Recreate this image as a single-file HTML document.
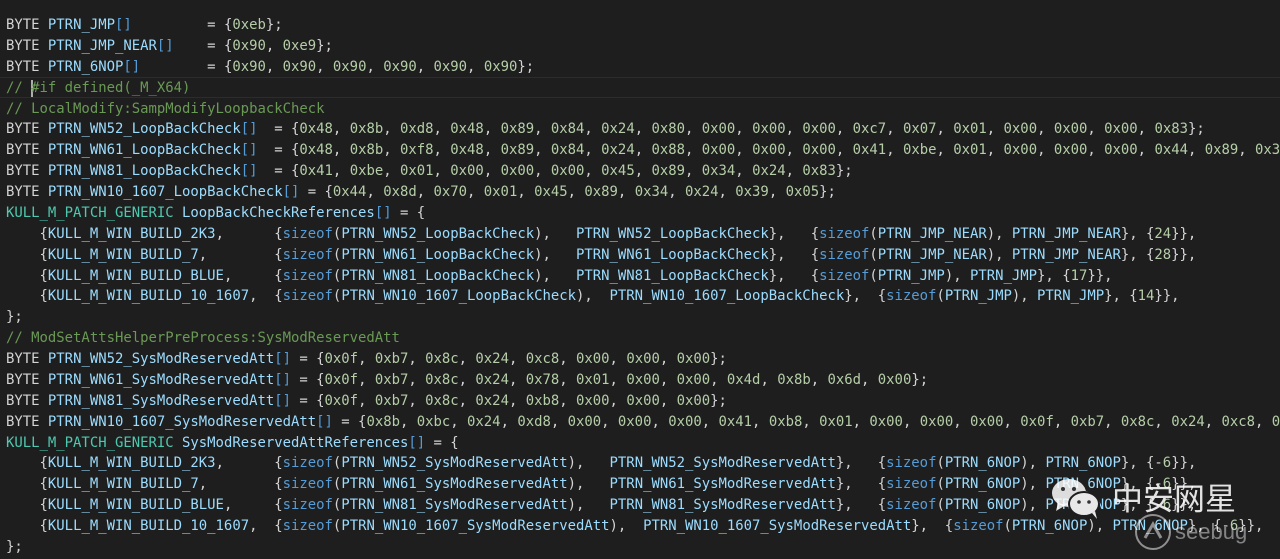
<!DOCTYPE html>
<html><head><meta charset="utf-8"><style>
html,body{margin:0;padding:0;background:#1e1e1e;width:1280px;height:559px;overflow:hidden}
#c{position:absolute;left:6px;top:15px;font-family:"DejaVu Sans Mono","Liberation Mono",monospace;font-size:13.93px;line-height:20.88px;color:#d4d4d4;white-space:pre}
.v{color:#9cdcfe}.b{color:#569cd6}.n{color:#b5cea8}.c{color:#6a9955}.t{color:#4ec9b0}
.cur{position:absolute;left:0;width:1280px;top:77px;height:21px;border-top:1px solid #2c2c2c;border-bottom:1px solid #2c2c2c;box-sizing:border-box}
.caret{position:absolute;left:31px;top:80px;width:2px;height:17px;background:#aeafad}
.wm{position:absolute;color:rgba(255,255,255,.88);font-family:"Noto Sans CJK SC",sans-serif}
</style></head><body>
<div class="cur"></div><div class="caret"></div>
<div id="c">BYTE <span class="v">PTRN_JMP</span><span class="b">[]</span>         = {<span class="n">0xeb</span>};
BYTE <span class="v">PTRN_JMP_NEAR</span><span class="b">[]</span>    = {<span class="n">0x90</span>, <span class="n">0xe9</span>};
BYTE <span class="v">PTRN_6NOP</span><span class="b">[]</span>        = {<span class="n">0x90</span>, <span class="n">0x90</span>, <span class="n">0x90</span>, <span class="n">0x90</span>, <span class="n">0x90</span>, <span class="n">0x90</span>};
<span class="c">// #if defined(_M_X64)</span>
<span class="c">// LocalModify:SampModifyLoopbackCheck</span>
BYTE <span class="v">PTRN_WN52_LoopBackCheck</span><span class="b">[]</span>  = {<span class="n">0x48</span>, <span class="n">0x8b</span>, <span class="n">0xd8</span>, <span class="n">0x48</span>, <span class="n">0x89</span>, <span class="n">0x84</span>, <span class="n">0x24</span>, <span class="n">0x80</span>, <span class="n">0x00</span>, <span class="n">0x00</span>, <span class="n">0x00</span>, <span class="n">0xc7</span>, <span class="n">0x07</span>, <span class="n">0x01</span>, <span class="n">0x00</span>, <span class="n">0x00</span>, <span class="n">0x00</span>, <span class="n">0x83</span>};
BYTE <span class="v">PTRN_WN61_LoopBackCheck</span><span class="b">[]</span>  = {<span class="n">0x48</span>, <span class="n">0x8b</span>, <span class="n">0xf8</span>, <span class="n">0x48</span>, <span class="n">0x89</span>, <span class="n">0x84</span>, <span class="n">0x24</span>, <span class="n">0x88</span>, <span class="n">0x00</span>, <span class="n">0x00</span>, <span class="n">0x00</span>, <span class="n">0x41</span>, <span class="n">0xbe</span>, <span class="n">0x01</span>, <span class="n">0x00</span>, <span class="n">0x00</span>, <span class="n">0x00</span>, <span class="n">0x44</span>, <span class="n">0x89</span>, <span class="n">0x3</span>
BYTE <span class="v">PTRN_WN81_LoopBackCheck</span><span class="b">[]</span>  = {<span class="n">0x41</span>, <span class="n">0xbe</span>, <span class="n">0x01</span>, <span class="n">0x00</span>, <span class="n">0x00</span>, <span class="n">0x00</span>, <span class="n">0x45</span>, <span class="n">0x89</span>, <span class="n">0x34</span>, <span class="n">0x24</span>, <span class="n">0x83</span>};
BYTE <span class="v">PTRN_WN10_1607_LoopBackCheck</span><span class="b">[]</span> = {<span class="n">0x44</span>, <span class="n">0x8d</span>, <span class="n">0x70</span>, <span class="n">0x01</span>, <span class="n">0x45</span>, <span class="n">0x89</span>, <span class="n">0x34</span>, <span class="n">0x24</span>, <span class="n">0x39</span>, <span class="n">0x05</span>};
<span class="t">KULL_M_PATCH_GENERIC</span> <span class="v">LoopBackCheckReferences</span><span class="b">[]</span> = {
    {<span class="v">KULL_M_WIN_BUILD_2K3</span>,      {<span class="b">sizeof</span>(<span class="v">PTRN_WN52_LoopBackCheck</span>),   <span class="v">PTRN_WN52_LoopBackCheck</span>},   {<span class="b">sizeof</span>(<span class="v">PTRN_JMP_NEAR</span>), <span class="v">PTRN_JMP_NEAR</span>}, {<span class="n">24</span>}},
    {<span class="v">KULL_M_WIN_BUILD_7</span>,        {<span class="b">sizeof</span>(<span class="v">PTRN_WN61_LoopBackCheck</span>),   <span class="v">PTRN_WN61_LoopBackCheck</span>},   {<span class="b">sizeof</span>(<span class="v">PTRN_JMP_NEAR</span>), <span class="v">PTRN_JMP_NEAR</span>}, {<span class="n">28</span>}},
    {<span class="v">KULL_M_WIN_BUILD_BLUE</span>,     {<span class="b">sizeof</span>(<span class="v">PTRN_WN81_LoopBackCheck</span>),   <span class="v">PTRN_WN81_LoopBackCheck</span>},   {<span class="b">sizeof</span>(<span class="v">PTRN_JMP</span>), <span class="v">PTRN_JMP</span>}, {<span class="n">17</span>}},
    {<span class="v">KULL_M_WIN_BUILD_10_1607</span>,  {<span class="b">sizeof</span>(<span class="v">PTRN_WN10_1607_LoopBackCheck</span>),  <span class="v">PTRN_WN10_1607_LoopBackCheck</span>},  {<span class="b">sizeof</span>(<span class="v">PTRN_JMP</span>), <span class="v">PTRN_JMP</span>}, {<span class="n">14</span>}},
};
<span class="c">// ModSetAttsHelperPreProcess:SysModReservedAtt</span>
BYTE <span class="v">PTRN_WN52_SysModReservedAtt</span><span class="b">[]</span> = {<span class="n">0x0f</span>, <span class="n">0xb7</span>, <span class="n">0x8c</span>, <span class="n">0x24</span>, <span class="n">0xc8</span>, <span class="n">0x00</span>, <span class="n">0x00</span>, <span class="n">0x00</span>};
BYTE <span class="v">PTRN_WN61_SysModReservedAtt</span><span class="b">[]</span> = {<span class="n">0x0f</span>, <span class="n">0xb7</span>, <span class="n">0x8c</span>, <span class="n">0x24</span>, <span class="n">0x78</span>, <span class="n">0x01</span>, <span class="n">0x00</span>, <span class="n">0x00</span>, <span class="n">0x4d</span>, <span class="n">0x8b</span>, <span class="n">0x6d</span>, <span class="n">0x00</span>};
BYTE <span class="v">PTRN_WN81_SysModReservedAtt</span><span class="b">[]</span> = {<span class="n">0x0f</span>, <span class="n">0xb7</span>, <span class="n">0x8c</span>, <span class="n">0x24</span>, <span class="n">0xb8</span>, <span class="n">0x00</span>, <span class="n">0x00</span>, <span class="n">0x00</span>};
BYTE <span class="v">PTRN_WN10_1607_SysModReservedAtt</span><span class="b">[]</span> = {<span class="n">0x8b</span>, <span class="n">0xbc</span>, <span class="n">0x24</span>, <span class="n">0xd8</span>, <span class="n">0x00</span>, <span class="n">0x00</span>, <span class="n">0x00</span>, <span class="n">0x41</span>, <span class="n">0xb8</span>, <span class="n">0x01</span>, <span class="n">0x00</span>, <span class="n">0x00</span>, <span class="n">0x00</span>, <span class="n">0x0f</span>, <span class="n">0xb7</span>, <span class="n">0x8c</span>, <span class="n">0x24</span>, <span class="n">0xc8</span>, <span class="n">0</span>
<span class="t">KULL_M_PATCH_GENERIC</span> <span class="v">SysModReservedAttReferences</span><span class="b">[]</span> = {
    {<span class="v">KULL_M_WIN_BUILD_2K3</span>,      {<span class="b">sizeof</span>(<span class="v">PTRN_WN52_SysModReservedAtt</span>),   <span class="v">PTRN_WN52_SysModReservedAtt</span>},   {<span class="b">sizeof</span>(<span class="v">PTRN_6NOP</span>), <span class="v">PTRN_6NOP</span>}, {-<span class="n">6</span>}},
    {<span class="v">KULL_M_WIN_BUILD_7</span>,        {<span class="b">sizeof</span>(<span class="v">PTRN_WN61_SysModReservedAtt</span>),   <span class="v">PTRN_WN61_SysModReservedAtt</span>},   {<span class="b">sizeof</span>(<span class="v">PTRN_6NOP</span>), <span class="v">PTRN_6NOP</span>}, {-<span class="n">6</span>}},
    {<span class="v">KULL_M_WIN_BUILD_BLUE</span>,     {<span class="b">sizeof</span>(<span class="v">PTRN_WN81_SysModReservedAtt</span>),   <span class="v">PTRN_WN81_SysModReservedAtt</span>},   {<span class="b">sizeof</span>(<span class="v">PTRN_6NOP</span>), <span class="v">PTRN_6NOP</span>}, {-<span class="n">6</span>}},
    {<span class="v">KULL_M_WIN_BUILD_10_1607</span>,  {<span class="b">sizeof</span>(<span class="v">PTRN_WN10_1607_SysModReservedAtt</span>),  <span class="v">PTRN_WN10_1607_SysModReservedAtt</span>},  {<span class="b">sizeof</span>(<span class="v">PTRN_6NOP</span>), <span class="v">PTRN_6NOP</span>}, {-<span class="n">6</span>}},
};</div>
<svg style="position:absolute;left:1050px;top:475px" width="60" height="50" viewBox="0 0 60 50">
<ellipse cx="19" cy="18" rx="17" ry="14" fill="rgba(255,255,255,.85)"/>
<path d="M8 28 L6 36 L16 30Z" fill="rgba(255,255,255,.85)"/>
<ellipse cx="34" cy="29" rx="15" ry="12" fill="#e8e8e8" stroke="#1e1e1e" stroke-width="2"/>
<path d="M42 38 L47 44 L45 36Z" fill="#e8e8e8"/>
<circle cx="13" cy="14" r="2" fill="#333"/><circle cx="24" cy="14" r="2" fill="#333"/>
<circle cx="29" cy="27" r="1.8" fill="#333"/><circle cx="39" cy="27" r="1.8" fill="#333"/>
</svg>
<div class="wm" style="left:1112px;top:480px;font-size:31px;line-height:34px">中安网星</div>
<svg style="position:absolute;left:1133px;top:512px" width="40" height="40"><circle cx="20" cy="20" r="17" fill="none" stroke="rgba(255,255,255,.5)" stroke-width="2"/><path d="M12 26 L20 12 L28 26" fill="none" stroke="rgba(255,255,255,.5)" stroke-width="3"/></svg>
<div class="wm" style="left:1175px;top:520px;font-size:22px;line-height:24px;color:rgba(255,255,255,.45);font-family:'Liberation Sans',sans-serif">seebug</div>
</body></html>
